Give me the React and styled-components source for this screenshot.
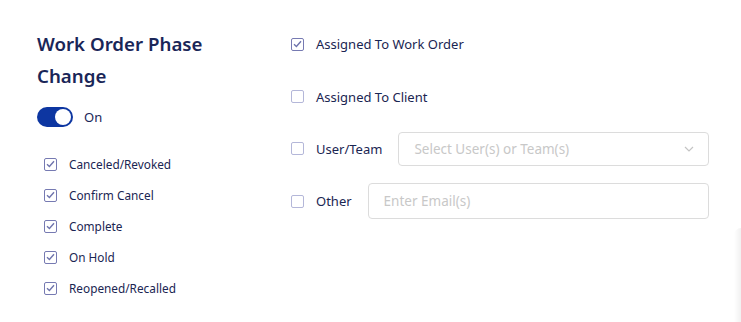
import React, { useState } from 'react';
import styled, { createGlobalStyle } from 'styled-components';

const GlobalStyle = createGlobalStyle`
  html, body {
    margin: 0;
    padding: 0;
    background: #fff;
  }
  body {
    font-family: "Noto Sans", "Open Sans", sans-serif;
    color: #1a2552;
  }
`;

const phases = ['Canceled/Revoked', 'Confirm Cancel', 'Complete', 'On Hold', 'Reopened/Recalled'];

function Check({ checked }) {
  return (
    <Box checked={checked}>
      {checked && (
        <svg width="9" height="8" viewBox="0 0 9 8">
          <path d="M1 4.2 L3.4 6.4 L8 1.2" fill="none" stroke="#6f74ad" strokeWidth="1.4" />
        </svg>
      )}
    </Box>
  );
}

function Chevron() {
  return (
    <svg width="10" height="6" viewBox="0 0 10 6">
      <path d="M1 1 L5 5 L9 1" fill="none" stroke="#c4c4c4" strokeWidth="1.2" />
    </svg>
  );
}

export default function App() {
  const [on, setOn] = useState(true);

  return (
    <>
      <GlobalStyle />
      <Page>
        <LeftCol>
          <Title>Work Order Phase Change</Title>

          <ToggleRow onClick={() => setOn(!on)}>
            <Toggle on={on}>
              <Knob on={on} />
            </Toggle>
            <ToggleLabel>{on ? 'On' : 'Off'}</ToggleLabel>
          </ToggleRow>

          <PhaseList>
            {phases.map(p => (
              <PhaseItem key={p}>
                <Check checked />
                <span>{p}</span>
              </PhaseItem>
            ))}
          </PhaseList>
        </LeftCol>

        <RightCol>
          <Recipient>
            <Check checked />
            <RecipientLabel>Assigned To Work Order</RecipientLabel>
          </Recipient>

          <Recipient>
            <Check />
            <RecipientLabel>Assigned To Client</RecipientLabel>
          </Recipient>

          <Recipient>
            <Check />
            <RecipientLabel>User/Team</RecipientLabel>
            <Field height={34}>
              <Placeholder>Select User(s) or Team(s)</Placeholder>
              <Chevron />
            </Field>
          </Recipient>

          <Recipient>
            <Check />
            <RecipientLabel>Other</RecipientLabel>
            <Field height={36}>
              <Placeholder>Enter Email(s)</Placeholder>
            </Field>
          </Recipient>
        </RightCol>

        <DrawerEdge />
      </Page>
    </>
  );
}

const Page = styled.div`
  position: relative;
  display: grid;
  grid-template-columns: 254px 418px;
  width: 741px;
  height: 322px;
  box-sizing: border-box;
  padding: 28px 0 0 37px;
  overflow: hidden;
`;

const LeftCol = styled.section`
  display: flex;
  flex-direction: column;
`;

const Title = styled.h1`
  margin: 0;
  width: 200px;
  font-size: 18.7px;
  font-weight: 600;
  line-height: 32px;
  color: #1a2658;
`;

const ToggleRow = styled.div`
  display: flex;
  align-items: center;
  gap: 11px;
  margin-top: 15px;
  cursor: pointer;
`;

const Toggle = styled.div`
  display: flex;
  align-items: center;
  justify-content: ${p => (p.on ? 'flex-end' : 'flex-start')};
  width: 36px;
  height: 20px;
  box-sizing: border-box;
  padding: 2px;
  border-radius: 10px;
  background: ${p => (p.on ? '#0d36a1' : '#c9cbd6')};
`;

const Knob = styled.span`
  width: 16px;
  height: 16px;
  border-radius: 50%;
  background: #fff;
`;

const ToggleLabel = styled.span`
  font-size: 13px;
  color: #1a2658;
`;

const PhaseList = styled.ul`
  list-style: none;
  margin: 29px 0 0;
  padding: 0 0 0 7px;
  display: flex;
  flex-direction: column;
  gap: 15px;
`;

const PhaseItem = styled.li`
  display: flex;
  align-items: center;
  gap: 12px;
  height: 16px;
  font-size: 11.8px;
  color: #1a2552;
`;

const Box = styled.span`
  flex: none;
  display: flex;
  align-items: center;
  justify-content: center;
  width: 13px;
  height: 13px;
  box-sizing: border-box;
  border: 1.6px solid ${p => (p.checked ? '#767ab2' : '#b4b7d9')};
  border-radius: 2px;
  background: #fff;
`;

const RightCol = styled.section`
  display: flex;
  flex-direction: column;
  margin-top: -10px;
`;

const Recipient = styled.div`
  display: flex;
  align-items: center;
  min-height: 52.4px;
  font-size: 13px;
  color: #1a2552;

  & > span:first-child {
    margin-right: 12px;
  }
`;

const RecipientLabel = styled.span`
  margin-right: 16px;
  white-space: nowrap;
`;

const Field = styled.div`
  flex: 1;
  display: flex;
  align-items: center;
  justify-content: space-between;
  height: ${p => p.height}px;
  box-sizing: border-box;
  padding: 0 14px 0 15px;
  border: 1px solid #dcdcdc;
  border-radius: 4px;
  background: #fff;
`;

const Placeholder = styled.span`
  font-size: 13.5px;
  color: #c8c8c8;
`;

const DrawerEdge = styled.div`
  position: absolute;
  right: 0;
  top: 228px;
  bottom: -10px;
  width: 7px;
  border-radius: 8px 0 0 0;
  background: linear-gradient(to right, #ffffff, #f1f1f1);
`;
